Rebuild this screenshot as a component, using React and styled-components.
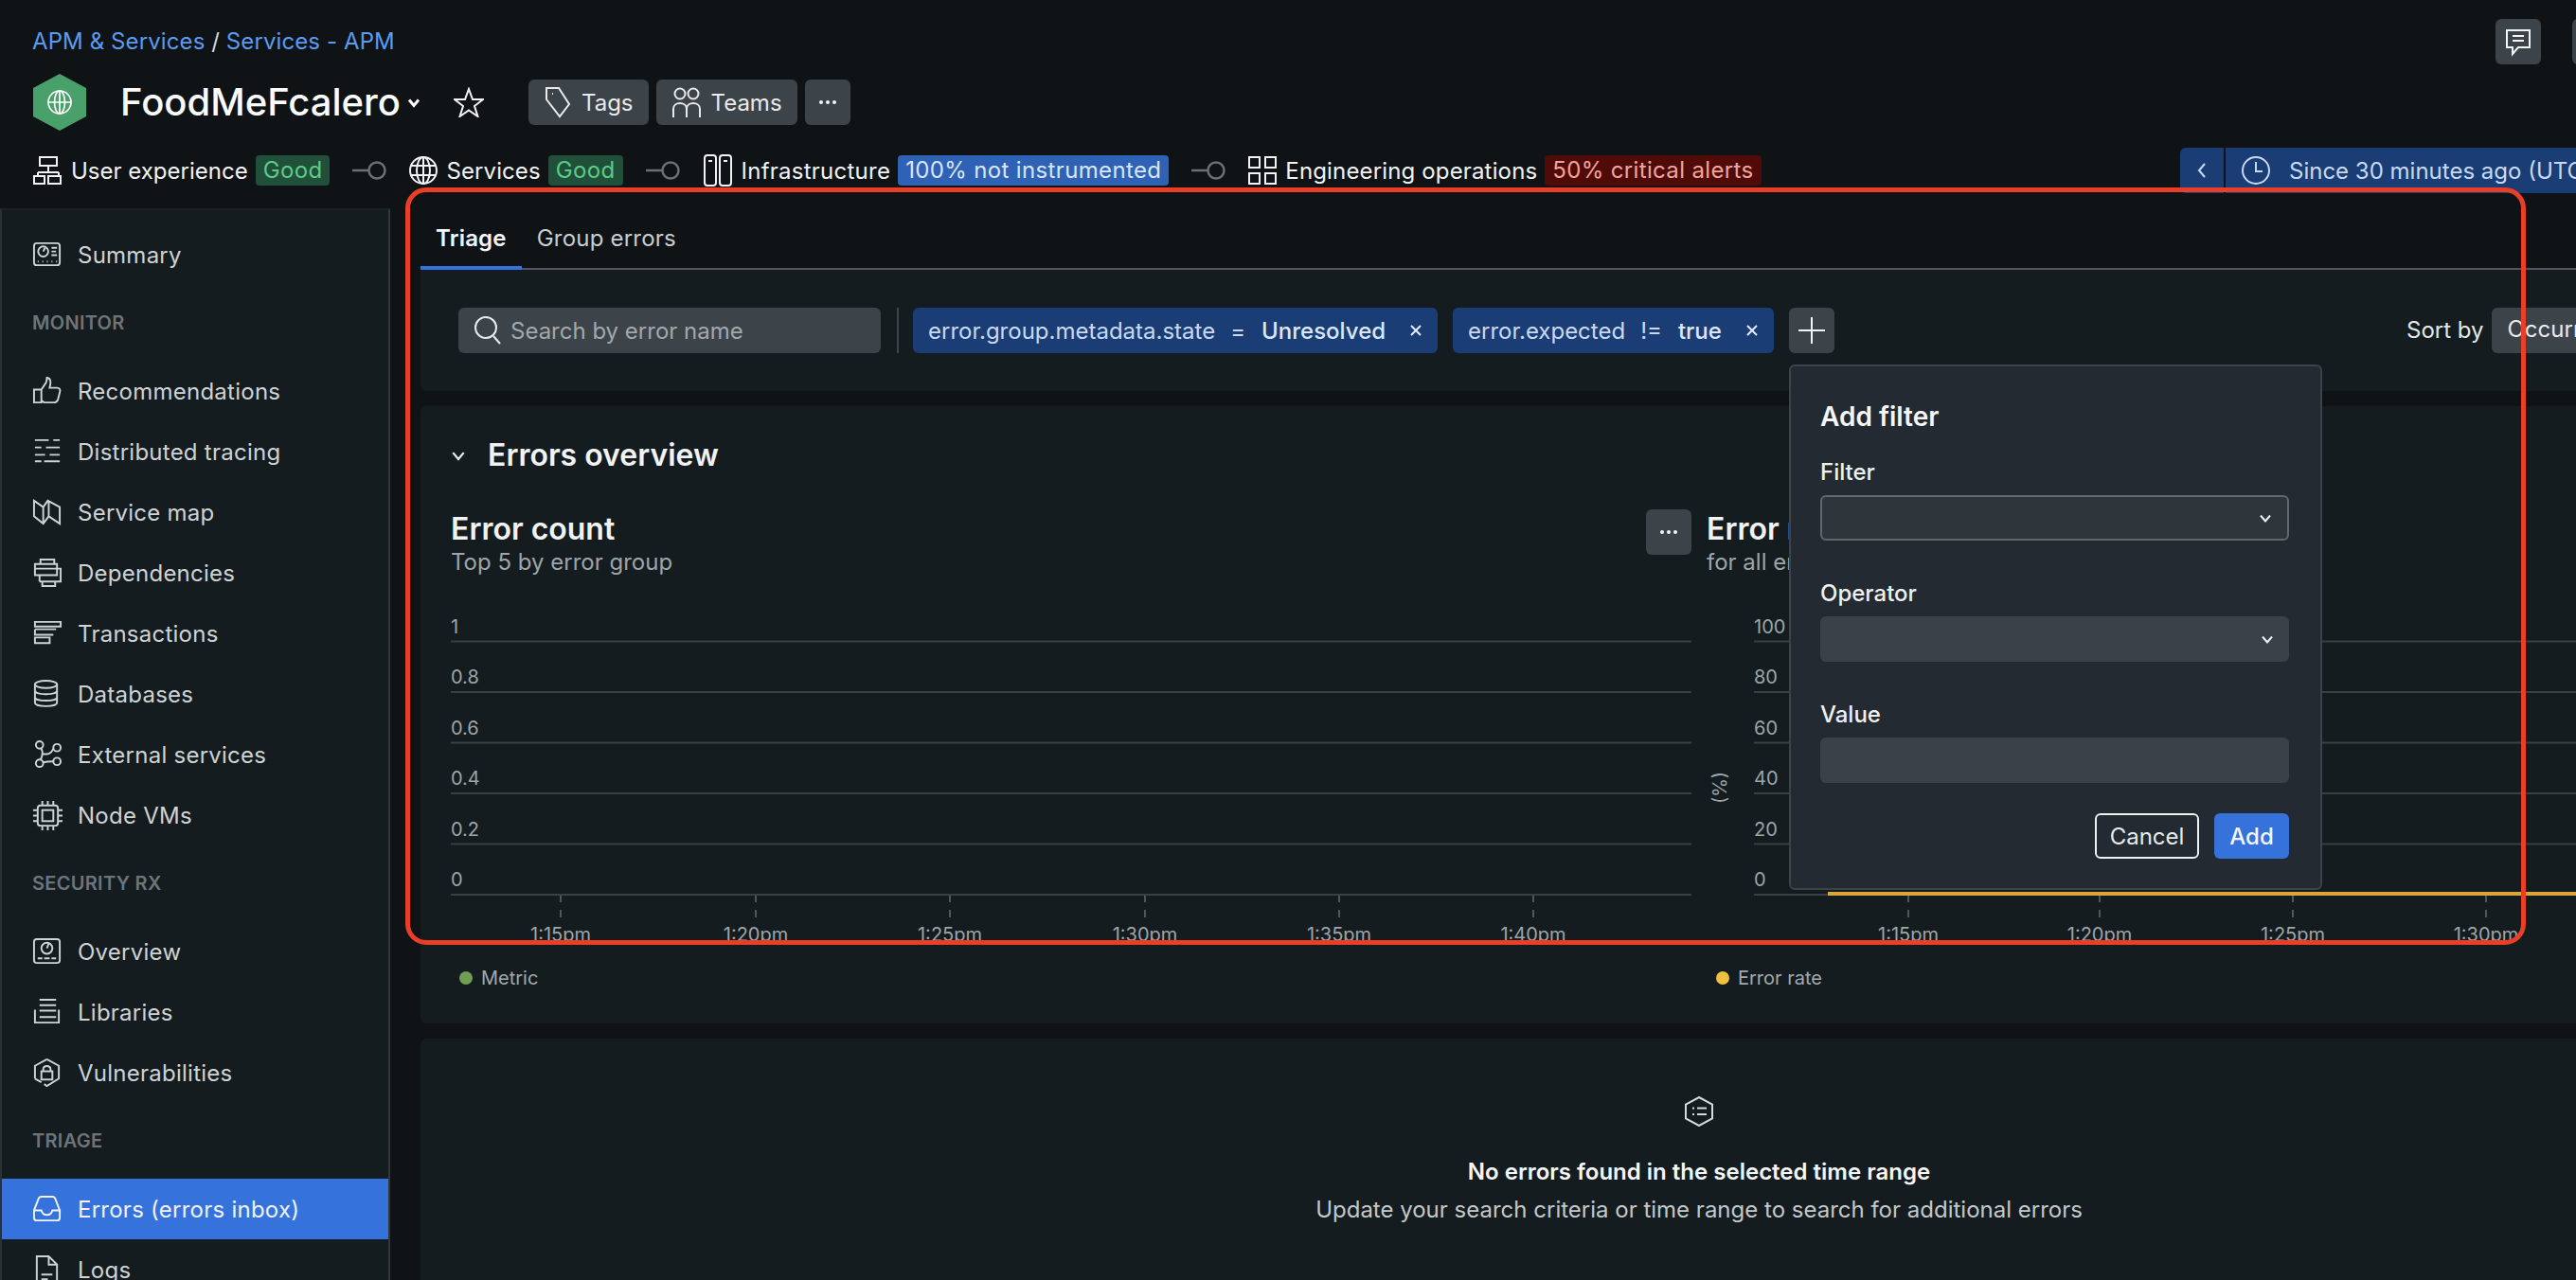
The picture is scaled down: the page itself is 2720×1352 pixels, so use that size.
import React from 'react';
import styled, { createGlobalStyle } from 'styled-components';

const Global = createGlobalStyle`
  html, body { margin: 0; padding: 0; background: #0f1315; }
  * { box-sizing: border-box; }
  body { font-family: Inter, "Noto Sans", "Liberation Sans", sans-serif; color: #e8eaeb; }
`;

const Page = styled.div`
  position: relative; width: 2720px; height: 1352px; overflow: hidden;
  display: flex; flex-direction: column; background: #0f1315;
`;
const Header = styled.header`
  flex: 0 0 220px; height: 220px; padding: 20px 0 0 34px; display: flex; flex-direction: column;
`;
const TopRow = styled.div`display: flex; align-items: center; height: 48px;`;
const Crumbs = styled.nav`font-size: 24px; line-height: 48px; color: #d6d9db; white-space: nowrap; letter-spacing: 0.1px;`;
const Crumb = styled.a`color: #5b9bf0;`;
const TopActions = styled.div`margin-left: auto; margin-right: -44px; display: flex; gap: 33px;`;
const SquareBtn = styled.button`
  width: 48px; height: 48px; border: 0; border-radius: 6px; background: #3c4349; color: #f2f4f5;
  display: inline-flex; align-items: center; justify-content: center; padding: 0; flex: none;
`;
const TitleRow = styled.div`display: flex; align-items: center; height: 48px; margin-top: 16px;`;
const Logo = styled.svg`flex: none; margin-left: 1px;`;
const Title = styled.h1`
  margin: 0 0 0 36px; font-size: 40px; font-weight: 500; line-height: 48px; color: #fafbfb; white-space: nowrap;
`;
const TitleCaret = styled.span`display: inline-flex; margin-left: 7px; color: #fff;`;
const StarWrap = styled.span`display: inline-flex; margin-left: 35px; margin-right: 47px; color: #f2f4f5;`;
const PillBtn = styled.button`
  height: 48px; border: 0; border-radius: 6px; background: #3c4349; color: #e8eaeb; font: inherit; font-size: 24px;
  display: inline-flex; align-items: center; gap: 10px; padding: 0 16px; margin-right: 8px;
`;
const StatusRow = styled.div`display: flex; align-items: center; height: 48px; margin-top: 24px; color: #f0f2f3;`;
const StatusIcon = styled.svg`flex: none;`;
const StatusLabel = styled.span`font-size: 24px; margin-left: 9px; white-space: nowrap; letter-spacing: ${p => p.$ls ?? 0.1}px;`;
const Badge = styled.span`
  height: 32px; line-height: 32px; padding: 0 8px; border-radius: 4px; font-size: 24px; margin-left: 8px; white-space: nowrap; letter-spacing: 0.35px;
  background: ${p => p.$tone === 'good' ? '#20503a' : p.$tone === 'info' ? '#2f62b5' : '#500a08'};
  color: ${p => p.$tone === 'good' ? '#5ccb88' : p.$tone === 'info' ? '#d8e6fb' : '#f0a59c'};
`;
const Connector = styled.svg`margin: 0 24px; flex: none;`;
const TimePicker = styled.div`
  margin-left: auto; width: 418px; height: 48px; display: flex; align-items: center; background: #1a3d75;
  border-radius: 6px 0 0 6px; color: #c9d9f3; font-size: 24px; white-space: nowrap; overflow: hidden; flex: none;
`;
const PickerPrev = styled.span`
  width: 48px; height: 48px; border-right: 2px solid #0f1315; display: flex; align-items: center; justify-content: center; flex: none;
`;
const PickerText = styled.span`margin-left: 16px; display: flex; align-items: center; gap: 19px;`;

const Body = styled.div`flex: 1; display: flex; min-height: 0;`;
const Sidebar = styled.aside`
  flex: 0 0 412px; width: 412px; background: #141c1f; border-right: 2px solid #2f373c; border-left: 2px solid #2a3136; border-top: 2px solid #1b2226;
  display: flex; flex-direction: column; padding-top: 15px;
`;
const NavItem = styled.a`
  height: 64px; flex: none; display: flex; align-items: center; gap: 16px; padding-left: 32px; font-size: 24px; letter-spacing: 0.25px;
  background: ${p => p.$active ? '#3672db' : 'transparent'}; color: ${p => p.$active ? '#eef3fc' : '#ced3d6'};
`;
const NavSection = styled.div`
  height: 32px; line-height: 32px; padding-left: 32px; font-size: 20px; font-weight: 600; color: #6e757a; letter-spacing: 0.3px; flex: none;
  margin: 24px 0;
`;
const Main = styled.main`flex: 1; min-width: 0; padding-left: 32px; overflow: hidden;`;
const Content = styled.div`width: 2700px; display: flex; flex-direction: column;`;
const Tabs = styled.div`display: flex; height: 65px; border-bottom: 2px solid #50575b;`;
const Tab = styled.div`
  height: 65px; padding: 0 16px; line-height: 64px; font-size: 24px; white-space: nowrap; letter-spacing: 0.2px;
  color: ${p => p.$on ? '#f5f6f7' : '#c9ced1'}; font-weight: ${p => p.$on ? 600 : 400};
  border-bottom: ${p => p.$on ? '4px solid #3672db' : '0'};
`;
const FilterBar = styled.section`
  height: 128px; padding: 40px 40px 0; background: #141c1f; display: flex; align-items: flex-start;
  border-radius: 0 0 6px 6px;
`;
const Search = styled.div`
  width: 446px; height: 48px; background: #3c4349; border-radius: 6px; display: flex; align-items: center; gap: 9px;
  padding-left: 16px; color: #a2a8ac; font-size: 24px; flex: none;
`;
const SearchIcon = styled.svg`color: #e8eaeb; flex: none;`;
const Divider = styled.span`width: 2px; height: 48px; background: #3c4349; margin: 0 15px 0 17px; flex: none;`;
const Chip = styled.div`
  height: 48px; border-radius: 6px; background: #1a3d75; color: #c9d9f3; font-size: 24px; display: flex; align-items: center;
  padding: 0 16px; margin-right: 16px; white-space: nowrap; flex: none; width: ${p => p.$w}px;
`;
const ChipOp = styled.span`margin: 0 17px 0 16px;`;
const ChipValue = styled.span`font-weight: 500; color: #dbe7fa;`;
const ChipClose = styled.span`margin-left: auto; display: inline-flex; color: #e4ecfa;`;
const PlusWrap = styled.div`position: relative; flex: none;`;
const Dialog = styled.div`
  position: absolute; left: 0; top: 60px; width: 563px; height: 555px; background: #232a31; border: 2px solid #3c4349; border-radius: 6px;
  padding: 35px 33px 0 31px; z-index: 5; display: flex; flex-direction: column;
`;
const DialogTitle = styled.div`font-size: 28px; font-weight: 600; line-height: 36px; color: #f5f6f7;`;
const FieldLabel = styled.label`
  font-size: 24px; font-weight: 500; line-height: 32px; color: #eef0f1; margin-top: ${p => p.$first ? 25 : 40}px; margin-bottom: 8px;
`;
const FieldBox = styled.div`
  height: 48px; border-radius: 6px; display: flex; align-items: center; justify-content: flex-end; padding-right: 16px; color: #eef0f1;
  background: ${p => p.$outlined ? '#2e353b' : '#3a4148'}; border: ${p => p.$outlined ? '2px solid #62686d' : '0'};
`;
const DialogActions = styled.div`display: flex; justify-content: flex-end; gap: 16px; margin-top: 32px;`;
const Ghost = styled.button`
  width: 110px; height: 48px; font: inherit; font-size: 24px; border-radius: 6px; background: transparent; border: 2px solid #eef0f1; color: #e8eaeb; padding: 0;
`;
const Primary = styled.button`
  width: 79px; height: 48px; font: inherit; font-size: 24px; font-weight: 500; border-radius: 6px; background: #3672db; border: 0; color: #f2f6fd; padding: 0;
`;
const SortLabel = styled.span`margin-left: 604px; font-size: 24px; line-height: 48px; color: #e4e7e8; white-space: nowrap; flex: none;`;
const SortBox = styled.div`
  margin-left: 8px; width: 300px; height: 48px; background: #3c4349; border-radius: 6px; padding-left: 17px; font-size: 24px; line-height: 46px; color: #e8eaeb; flex: none;
`;
const Overview = styled.section`margin-top: 16px; height: 652px; padding: 32px 32px 0; background: #141c1f; border-radius: 6px;`;
const OverviewHead = styled.div`display: flex; align-items: center; height: 40px; gap: 23px;`;
const OverviewTitle = styled.h2`margin: 0; font-size: 32px; font-weight: 600; line-height: 40px; color: #f0f2f3; white-space: nowrap;`;
const Charts = styled.div`display: grid; grid-template-columns: 1fr 1fr; gap: 16px; margin-top: 37px;`;
const ChartCol = styled.div`min-width: 0;`;
const ChartHead = styled.div`display: flex; justify-content: space-between; height: 72px; margin-bottom: 30px;`;
const ChartTitle = styled.div`font-size: 32px; font-weight: 600; line-height: 42px; height: 40px; color: #f0f2f3;`;
const ChartSub = styled.div`font-size: 24px; line-height: 32px; color: #9ea5a9;`;
const ChartSvg = styled.svg`display: block;`;
const Legend = styled.div`
  display: flex; align-items: center; gap: 9px; height: 32px; margin-top: 17px; font-size: 20px; color: #a3a9ad; padding-left: ${p => p.$pad}px;
`;
const Dot = styled.span`width: 14px; height: 14px; border-radius: 50%; background: ${p => p.$c};`;
const Empty = styled.section`
  margin-top: 16px; height: 400px; background: #141c1f; border-radius: 6px; display: flex; flex-direction: column; align-items: center; padding-top: 61px;
`;
const EmptyTitle = styled.div`font-size: 24px; font-weight: 600; line-height: 32px; margin-top: 32px; color: #f5f6f7;`;
const EmptyText = styled.div`font-size: 24px; line-height: 32px; margin-top: 8px; color: #c3c8cb;`;
const Annotation = styled.div`
  position: absolute; left: 428px; top: 198px; width: 2239px; height: 800px; border: 5px solid #ea3f26; border-radius: 22px; pointer-events: none; z-index: 10;
`;
const NavIcon = styled.svg`flex: none;`;

const icons = {
  summary: <><rect x="2" y="4" width="28" height="24" rx="3"/><circle cx="12" cy="13" r="5.5"/><path d="M12 13l2-4M21 9h6M21 13h5M21 17h6M6 24h1M11 24h1M16 24h1M21 24h1M26 24h1"/></>,
  thumb: <><path d="M2 15h8v14H2zM10 15l4-6c2-2 2-5 2-7 4 0 5 5 3 11h8c3 0 4 2 3 5l-2 8c-1 2-2 3-4 3H13l-3-2"/></>,
  trace: <path d="M3 5h15M23 5h7M3 13h7M15 13h15M3 21h11M19 21h11M3 28h7M13 28h17" transform="translate(0 -1)"/>,
  map: <path d="M2 4l10 7 5-7 13 7v18l-12-8-6 8-10-8zM12 11v17M18 4v18" />,
  deps: <path d="M9 2h15v5H9zM3 7h24v12H3zM8 12h23v14H8M3 12h5M8 19v7M11 26h14v5H11z"/>,
  trans: <path d="M3 4h28v5H3zM3 12h23M3 12v6h20M3 21h16v6H3z"/>,
  db: <><ellipse cx="15" cy="6" rx="12" ry="4"/><path d="M3 6v20c0 5 24 5 24 0V6M3 13c0 5 24 5 24 0M3 20c0 5 24 5 24 0"/></>,
  ext: <><circle cx="8" cy="6" r="4"/><circle cx="27" cy="9" r="4"/><circle cx="8" cy="26" r="4"/><circle cx="27" cy="24" r="4"/><path d="M10 10c2 4 2 7-1 12M12 25c4-1 7-1 11-1M10 16h6c3 0 6-3 7-6"/></>,
  chip: <><rect x="6" y="6" width="22" height="22" rx="3"/><rect x="11" y="11" width="12" height="12"/><path d="M11 1v5M17 1v5M23 1v5M11 28v5M17 28v5M23 28v5M1 11h5M1 17h5M1 23h5M28 11h5M28 17h5M28 23h5"/></>,
  over: <><rect x="2" y="3" width="28" height="26" rx="3"/><circle cx="16" cy="13" r="6"/><path d="M16 13l2-5M6 24h5M13 24h6M21 24h5"/></>,
  lib: <path d="M8 3h18M8 9h18M8 15h18M3 14v14h26V14M8 22h18"/>,
  vuln: <><path d="M16 2l13 7v14l-13 8-3-2M3 23V9l13-7M3 23l7 4"/><rect x="10" y="15" width="12" height="9"/><path d="M12 15v-2c0-5 8-5 8 0v2"/></>,
  inbox: <path d="M2 18L7 5c.6-1 1-2 3-2h12c2 0 2.400 1 3 2l5 13v8c0 2-1 3-3 3H5c-2 0-3-1-3-3zM2 18h8c1 4 3 5 6 5s5-1 6-5h8"/>,
  doc: <path d="M5 2h13l9 9v21H5zM18 2v9h9M10 22h12M10 27h7"/>,
};
const Icon = ({ name }) => (
  <NavIcon width={32} height={32} viewBox="0 0 33 33" fill="none" stroke="currentColor" strokeWidth="2">
    {icons[name]}
  </NavIcon>
);

const Chevron = ({ s = 14, sw = 2 }) => (
  <svg width={s} height={s} viewBox="0 0 14 14" fill="none" stroke="currentColor" strokeWidth={sw}><path d="M2 4.500l5 6 5-6"/></svg>
);
const Close = () => (
  <svg width="14" height="14" viewBox="0 0 14 14" stroke="currentColor" strokeWidth="2"><path d="M2 2l10 10M12 2L2 12"/></svg>
);
const Dots = () => (
  <svg width="20" height="6" viewBox="0 0 20 6" fill="currentColor"><circle cx="3" cy="3" r="2"/><circle cx="10" cy="3" r="2"/><circle cx="17" cy="3" r="2"/></svg>
);
const ConnectorIcon = () => (
  <Connector width="36" height="24" viewBox="0 0 36 24" fill="none" stroke="#6a7074" strokeWidth="2.500">
    <path d="M0 12h18"/><circle cx="26" cy="12" r="8.500"/>
  </Connector>
);

const lines = [677.500, 731, 784.500, 838, 891.500, 945].map(v => v - 640);
const Chart = ({ x0, labels, ticks, times, rate }) => (
  <ChartSvg width="1310" height="360" viewBox="0 0 1310 360" fontFamily="Inter, sans-serif" fontSize="20" fill="#9ea5a9">
    {lines.map((y, i) => (
      <g key={y}>
        <path d={`M${x0} ${y}H1310`} stroke="#3a4145" strokeWidth="2"/>
        <text x={x0} y={y - 9}>{labels[i]}</text>
      </g>
    ))}
    {ticks.map((x, i) => (
      <g key={x}>
        <path d={`M${x} 306v7M${x} 321v8`} stroke="#50575b" strokeWidth="2"/>
        <text x={x} y={354} textAnchor="middle">{times[i]}</text>
      </g>
    ))}
    {rate && <path d="M128 304H1310" stroke="#d9a83c" strokeWidth="4"/>}
    {rate && <text transform="translate(21 192) rotate(-90)" textAnchor="middle">(%)</text>}
  </ChartSvg>
);

const nav = [
  { s: 'MONITOR', items: [['thumb', 'Recommendations'], ['trace', 'Distributed tracing'], ['map', 'Service map'], ['deps', 'Dependencies'], ['trans', 'Transactions'], ['db', 'Databases'], ['ext', 'External services'], ['chip', 'Node VMs']] },
  { s: 'SECURITY RX', items: [['over', 'Overview'], ['lib', 'Libraries'], ['vuln', 'Vulnerabilities']] },
  { s: 'TRIAGE', items: [['inbox', 'Errors (errors inbox)', true], ['doc', 'Logs']] },
];
const times = ['1:15pm', '1:20pm', '1:25pm', '1:30pm', '1:35pm', '1:40pm'];

export default function App() {
  return (
    <Page>
      <Global />
      <Header>
        <TopRow>
          <Crumbs><Crumb>APM &amp; Services</Crumb> / <Crumb>Services - APM</Crumb></Crumbs>
          <TopActions>
            <SquareBtn aria-label="Feedback">
              <svg width="30" height="32" viewBox="0 0 30 32" fill="none" stroke="currentColor" strokeWidth="2">
                <path d="M3 4h24v18H15l-6 7v-7H3zM9 10h12M9 15h12"/>
              </svg>
            </SquareBtn>
            <SquareBtn aria-label="Share" />
          </TopActions>
        </TopRow>
        <TitleRow>
          <Logo width="56" height="60" viewBox="0 0 56 60">
            <path d="M28 0l28 15v30L28 60 0 45V15z" fill="#4aa06b"/>
            <g transform="translate(15 17)" fill="none" stroke="#fff" strokeWidth="1.700">
              <circle cx="13" cy="13" r="12"/><ellipse cx="13" cy="13" rx="5.500" ry="12"/><path d="M13 1v24M1 13h24"/>
            </g>
          </Logo>
          <Title>FoodMeFcalero</Title>
          <TitleCaret><Chevron s={14} sw={3} /></TitleCaret>
          <StarWrap>
            <svg width="32" height="32" viewBox="0 0 32 32" fill="none" stroke="currentColor" strokeWidth="2">
              <path d="M16 2l4 11h11l-9 7 3.500 11L16 24.500 6.500 31 10 20l-9-7h11z"/>
            </svg>
          </StarWrap>
          <PillBtn>
            <svg width="30" height="34" viewBox="0 0 30 34" fill="none" stroke="currentColor" strokeWidth="2">
              <path d="M3 2h13l11 17-10 13L3 14zM9 8h1"/>
            </svg>
            Tags
          </PillBtn>
          <PillBtn>
            <svg width="32" height="34" viewBox="0 0 32 34" fill="none" stroke="currentColor" strokeWidth="2">
              <circle cx="9" cy="8" r="5.500"/><circle cx="23" cy="8" r="5.500"/>
              <path d="M2 33V24c0-8 14-8 14 0v9M16 24c0-8 14-8 14 0v9"/>
            </svg>
            Teams
          </PillBtn>
          <SquareBtn aria-label="More"><Dots /></SquareBtn>
        </TitleRow>
        <StatusRow>
          <StatusIcon width="32" height="32" viewBox="0 0 32 32" fill="none" stroke="currentColor" strokeWidth="2">
            <path d="M8 2h18v9H8zM17 11v7M6 18h22M6 18v4M28 18v4M2 22h11v8H2zM17 22h13v8H17z"/>
          </StatusIcon>
          <StatusLabel $ls={0}>User experience</StatusLabel>
          <Badge $tone="good">Good</Badge>
          <ConnectorIcon />
          <StatusIcon width="30" height="30" viewBox="0 0 30 30" fill="none" stroke="currentColor" strokeWidth="2">
            <circle cx="15" cy="15" r="14"/><ellipse cx="15" cy="15" rx="7" ry="14"/><path d="M15 1v28M2 10h26M2 20h26"/>
          </StatusIcon>
          <StatusLabel>Services</StatusLabel>
          <Badge $tone="good">Good</Badge>
          <ConnectorIcon />
          <StatusIcon width="32" height="34" viewBox="0 0 32 34" fill="none" stroke="currentColor" strokeWidth="2">
            <rect x="2" y="1" width="12" height="32" rx="3"/><rect x="18" y="1" width="12" height="32" rx="3"/>
            <path d="M6 7h4M22 7h4"/>
          </StatusIcon>
          <StatusLabel $ls={0.25}>Infrastructure</StatusLabel>
          <Badge $tone="info">100% not instrumented</Badge>
          <ConnectorIcon />
          <StatusIcon width="30" height="30" viewBox="0 0 30 30" fill="none" stroke="currentColor" strokeWidth="2">
            <rect x="1" y="1" width="11" height="11"/><rect x="18" y="1" width="11" height="11"/><rect x="1" y="18" width="11" height="11"/><rect x="18" y="18" width="11" height="11"/>
          </StatusIcon>
          <StatusLabel $ls={0.15}>Engineering operations</StatusLabel>
          <Badge $tone="alert">50% critical alerts</Badge>
          <TimePicker>
            <PickerPrev>
              <svg width="10" height="16" viewBox="0 0 10 16" fill="none" stroke="currentColor" strokeWidth="2"><path d="M8 1L2 8l6 7"/></svg>
            </PickerPrev>
            <PickerText>
              <svg width="32" height="32" viewBox="0 0 32 32" fill="none" stroke="currentColor" strokeWidth="2"><circle cx="16" cy="16" r="14"/><path d="M16 7v10h7"/></svg>
              Since 30 minutes ago (UTC)
            </PickerText>
          </TimePicker>
        </StatusRow>
      </Header>
      <Body>
        <Sidebar>
          <NavItem><Icon name="summary" />Summary</NavItem>
          {nav.map(g => (
            <React.Fragment key={g.s}>
              <NavSection>{g.s}</NavSection>
              {g.items.map(([ic, label, on]) => (
                <NavItem key={label} $active={on}><Icon name={ic} />{label}</NavItem>
              ))}
            </React.Fragment>
          ))}
        </Sidebar>
        <Main>
          <Content>
            <Tabs>
              <Tab $on>Triage</Tab>
              <Tab>Group errors</Tab>
            </Tabs>
            <FilterBar>
              <Search>
                <SearchIcon width="30" height="32" viewBox="0 0 30 32" fill="none" stroke="currentColor" strokeWidth="2">
                  <circle cx="13" cy="13" r="11"/><path d="M21 22l7 8"/>
                </SearchIcon>
                Search by error name
              </Search>
              <Divider />
              <Chip $w={554}>error.group.metadata.state<ChipOp>=</ChipOp><ChipValue>Unresolved</ChipValue><ChipClose><Close /></ChipClose></Chip>
              <Chip $w={339}>error.expected<ChipOp>!=</ChipOp><ChipValue>true</ChipValue><ChipClose><Close /></ChipClose></Chip>
              <PlusWrap>
                <SquareBtn aria-label="Add filter">
                  <svg width="30" height="30" viewBox="0 0 30 30" stroke="currentColor" strokeWidth="2"><path d="M15 1v28M1 15h28"/></svg>
                </SquareBtn>
                <Dialog>
                  <DialogTitle>Add filter</DialogTitle>
                  <FieldLabel $first>Filter</FieldLabel>
                  <FieldBox $outlined><Chevron /></FieldBox>
                  <FieldLabel>Operator</FieldLabel>
                  <FieldBox><Chevron /></FieldBox>
                  <FieldLabel>Value</FieldLabel>
                  <FieldBox />
                  <DialogActions>
                    <Ghost>Cancel</Ghost>
                    <Primary>Add</Primary>
                  </DialogActions>
                </Dialog>
              </PlusWrap>
              <SortLabel>Sort by</SortLabel>
              <SortBox>Occurrences</SortBox>
            </FilterBar>
            <Overview>
              <OverviewHead>
                <Chevron s={16} />
                <OverviewTitle>Errors overview</OverviewTitle>
              </OverviewHead>
              <Charts>
                <ChartCol>
                  <ChartHead>
                    <div>
                      <ChartTitle>Error count</ChartTitle>
                      <ChartSub>Top 5 by error group</ChartSub>
                    </div>
                    <SquareBtn aria-label="More"><Dots /></SquareBtn>
                  </ChartHead>
                  <Chart x0={0} labels={['1', '0.8', '0.6', '0.4', '0.2', '0']} ticks={[116, 322, 527, 733, 938, 1143]} times={times} />
                  <Legend $pad={9}><Dot $c="#6f9e54" />Metric</Legend>
                </ChartCol>
                <ChartCol>
                  <ChartHead>
                    <div>
                      <ChartTitle>Error rate</ChartTitle>
                      <ChartSub>for all errors</ChartSub>
                    </div>
                  </ChartHead>
                  <Chart x0={50} rate labels={['100', '80', '60', '40', '20', '0']} ticks={[213, 415, 619, 823, 1027, 1231]} times={times} />
                  <Legend $pad={10}><Dot $c="#f2c040" />Error rate</Legend>
                </ChartCol>
              </Charts>
            </Overview>
            <Empty>
              <svg width="32" height="32" viewBox="0 0 32 32" fill="none" stroke="#d5d9db" strokeWidth="2">
                <path d="M16 1l14 7.500v15L16 31 2 23.500v-15zM9 12.500h2M14 12.500h10M9 19h2M14 19h10"/>
              </svg>
              <EmptyTitle>No errors found in the selected time range</EmptyTitle>
              <EmptyText>Update your search criteria or time range to search for additional errors</EmptyText>
            </Empty>
          </Content>
        </Main>
      </Body>
      <Annotation />
    </Page>
  );
}
